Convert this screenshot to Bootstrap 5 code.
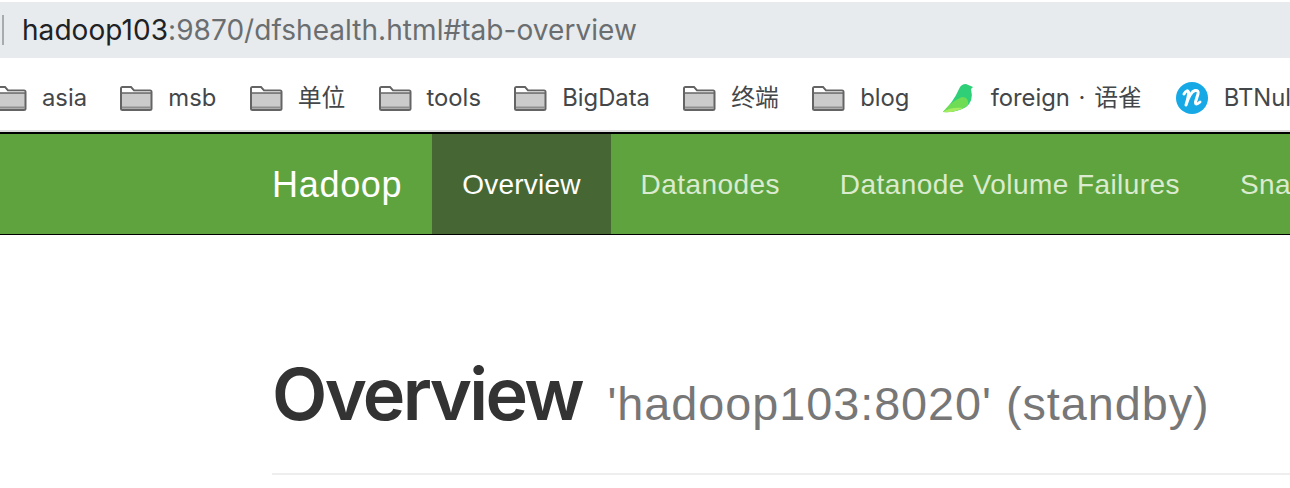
<!DOCTYPE html>
<html lang="en">
<head>
<meta charset="utf-8">
<title>Hadoop Overview</title>
<link href="https://cdn.jsdelivr.net/npm/bootstrap@5.3.0/dist/css/bootstrap.min.css" rel="stylesheet">
<style>
html,body{height:488px;overflow:hidden;background:#fff}
body{font-family:"Inter","Liberation Sans","Noto Sans CJK SC",sans-serif;color:#333}
.urlzone{padding-top:2px;background:#fff}
.urlbar{height:56px;background:#e8ebed;font-size:28px;color:#6a6e70;white-space:nowrap;letter-spacing:.05px}
.urlbar b{font-weight:400;color:#202124}
.urlcaret{width:2px;height:30px;background:#a9acae;margin:0 18px 0 2px}
.marks{height:72px;padding-top:8px;white-space:nowrap;overflow:hidden;font-size:23.800px;color:#44474a}
.markitem{gap:15px;flex:none;margin-left:32.300px}
.markitem.firstmark{margin-left:-7px}
.markitem.lastmark{margin-left:34px;gap:16px}
.markitem svg{flex:none}
.widedot{word-spacing:2px}
.sep{height:2px;background:#dcdcdc}
.hnav{height:103px;background:#5fa33e;border-top:2px solid #000;border-bottom:1px solid #000;padding-left:272px;white-space:nowrap;overflow:hidden;flex-wrap:nowrap;font-family:"Liberation Sans",sans-serif}
.hbrand{font-size:36px;color:#fff;padding:2px 30px 0 0;letter-spacing:.7px;flex:none}
.hlink{font-size:28px;color:#daebd0;padding:2px 30px 0;height:100%;display:flex;align-items:center;text-decoration:none;flex:none;letter-spacing:.42px}
.hlink.active{background:#466733;color:#fff;letter-spacing:.2px}
.pagehead{margin:123px 0 0 272px;border-bottom:2px solid #eee;height:117px}
.pagehead h1{font-size:72px;font-weight:600;color:#333;margin:0;line-height:1;white-space:nowrap;letter-spacing:-2.700px}
.pagehead small{font-family:"Liberation Sans",sans-serif;font-size:46.800px;font-weight:400;color:#777;margin-left:10px;letter-spacing:.96px}
</style>
</head>
<body>
<div class="urlzone">
  <div class="urlbar d-flex align-items-center">
    <span class="urlcaret"></span><span><b>hadoop103</b>:9870/dfshealth.html#tab-overview</span>
  </div>
</div>
<div class="marks d-flex align-items-center">
  <svg width="0" height="0" class="position-absolute"><defs>
    <symbol id="fold" viewBox="0 0 34 26"><path d="M2 24V3.500Q2 2 3.500 2H12l3 3.500H31Q32.500 5.500 32.500 7V24Q32.500 25 31 25H3.500Q2 25 2 24Z" fill="#cbcbcb" stroke="#646464" stroke-width="2"/><path d="M3 8h28.500V6.500H14.500L11.500 3H3Z" fill="#fff"/><path d="M2 8H32" stroke="#646464" stroke-width="1.500"/><path d="M3 22.500H32" stroke="#8e8e8e" stroke-width="2"/></symbol>
  </defs></svg>
  <div class="markitem firstmark d-flex align-items-center"><svg width="34" height="26"><use href="#fold"/></svg><span>asia</span></div>
  <div class="markitem d-flex align-items-center"><svg width="34" height="26"><use href="#fold"/></svg><span>msb</span></div>
  <div class="markitem d-flex align-items-center"><svg width="34" height="26"><use href="#fold"/></svg><span>单位</span></div>
  <div class="markitem d-flex align-items-center"><svg width="34" height="26"><use href="#fold"/></svg><span>tools</span></div>
  <div class="markitem d-flex align-items-center"><svg width="34" height="26"><use href="#fold"/></svg><span>BigData</span></div>
  <div class="markitem d-flex align-items-center"><svg width="34" height="26"><use href="#fold"/></svg><span>终端</span></div>
  <div class="markitem d-flex align-items-center"><svg width="34" height="26"><use href="#fold"/></svg><span>blog</span></div>
  <div class="markitem d-flex align-items-center"><svg width="34" height="30" viewBox="0 0 34 30"><path d="M1 29 C8 22 13 15 17 6 Q19 1 24 1 L31 4 L29 6 Q32 18 24 24 Q14 30 1 29Z" fill="#2fcf78"/><path d="M1 29 C7 21 13 17 20 14 Q27 14 26 22 Q16 30 1 29Z" fill="#6fdc55"/><path d="M1 29 C6 25 14 24 21 25 Q12 30 1 29Z" fill="#a6ec60"/></svg><span class="widedot">foreign · 语雀</span></div>
  <div class="markitem lastmark d-flex align-items-center"><svg width="32" height="32" viewBox="0 0 32 32"><circle cx="16" cy="16" r="16" fill="#16a9e6"/><path d="M8 12 Q11 7 12.500 10 Q13 13 10 23 Q14 10 19 8.500 Q23 8 22 12 L19.500 20 Q19.500 24 24 20" fill="none" stroke="#fff" stroke-width="3" stroke-linecap="round" stroke-linejoin="round"/></svg><span>BTNul</span></div>
</div>
<div class="sep"></div>
<nav class="hnav d-flex align-items-center">
  <span class="hbrand">Hadoop</span>
  <a class="hlink active" href="#">Overview</a>
  <a class="hlink" href="#">Datanodes</a>
  <a class="hlink" href="#">Datanode Volume Failures</a>
  <a class="hlink" href="#">Snapshot</a>
</nav>
<div class="pagehead">
  <h1>Overview <small>'hadoop103:8020' (standby)</small></h1>
</div>
</body>
</html>
